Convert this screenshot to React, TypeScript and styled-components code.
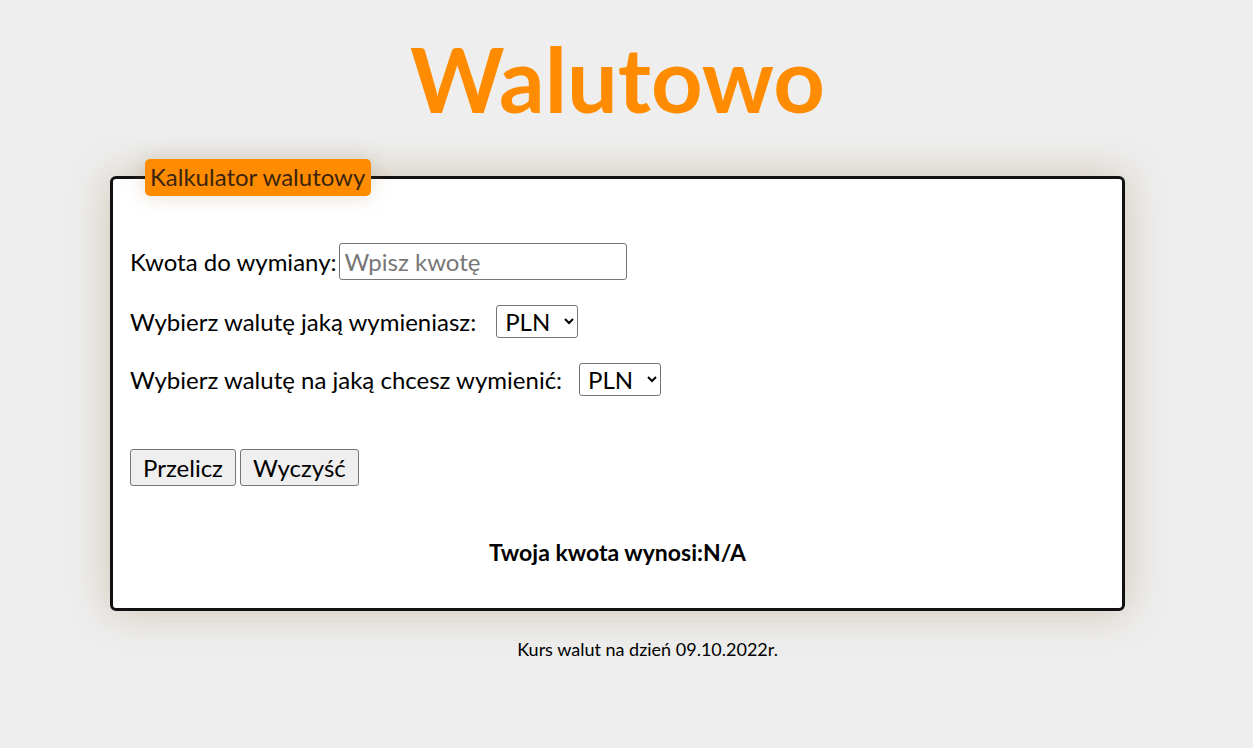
import React from "react";
import styled, { createGlobalStyle } from "styled-components";

const Global = createGlobalStyle`
  html, body { margin: 0; padding: 0; background: #eeeeee; }
  body { font-family: Lato, "Open Sans", sans-serif; color: #000; }
`;

const Page = styled.div`
  display: flex;
  flex-direction: column;
  padding: 0 128px 0 110px;
`;

const Title = styled.h1`
  margin: 24px 0 0 0;
  text-align: center;
  font-size: 90px;
  line-height: 108px;
  font-weight: 700;
  color: #ff8c00;
`;

const Card = styled.fieldset`
  margin: 27px 0 0 0;
  padding: 47px 17px 41px 17px;
  border: 3px solid #111;
  border-radius: 6px;
  background: #fff;
  box-shadow: 0 0 40px rgba(150, 120, 70, 0.35);
  display: flex;
  flex-direction: column;
  min-width: 0;
`;

const Legend = styled.legend`
  margin-left: 15px;
  padding: 3px 6px 4px 5px;
  background: #ff8c00;
  border-radius: 5px;
  font-size: 24px;
  line-height: 30px;
  color: #3a2410;
  box-shadow: 0 0 20px rgba(150, 120, 70, 0.25);
`;

const Row = styled.div<{ $mb: number }>`
  display: flex;
  align-items: center;
  font-size: 24px;
  height: 37px;
  margin-bottom: ${(p) => p.$mb}px;
`;

const Label = styled.label<{ $gap: number }>`
  margin-right: ${(p) => p.$gap}px;
`;

const TextInput = styled.input`
  box-sizing: border-box;
  width: 288px;
  height: 37px;
  font-family: Lato, sans-serif;
  font-size: 24px;
  padding: 0 5px;
  border: 1px solid #767676;
  border-radius: 3px;
  &::placeholder { color: #777; }
`;

const Select = styled.select`
  box-sizing: border-box;
  height: 33px;
  width: 82px;
  font-family: Lato, sans-serif;
  font-size: 24px;
  color: #000;
  background: #fff;
  border: 1px solid #767676;
  border-radius: 3px;
  padding: 0 2px 0 4px;
`;

const Buttons = styled.div`
  display: flex;
  gap: 4px;
  margin-top: 51px;
`;

const Button = styled.button`
  box-sizing: border-box;
  height: 37px;
  font-family: Lato, sans-serif;
  font-size: 24px;
  padding: 0 12px;
  background: #efefef;
  color: #000;
  border: 1px solid #767676;
  border-radius: 3px;
`;

const Result = styled.div`
  margin-top: 51px;
  text-align: center;
  font-size: 23px;
  font-weight: 700;
  line-height: 30px;
`;

const Footer = styled.p`
  margin: 27px 0 0 0;
  text-align: center;
  padding-left: 60px;
  font-size: 18px;
  line-height: 22px;
`;

export default function App() {
  return (
    <>
      <Global />
      <Page>
        <Title>Walutowo</Title>
        <Card>
          <Legend>Kalkulator walutowy</Legend>
          <Row $mb={23}>
            <Label $gap={2}>Kwota do wymiany:</Label>
            <TextInput placeholder="Wpisz kwotę" />
          </Row>
          <Row $mb={21}>
            <Label $gap={20}>Wybierz walutę jaką wymieniasz:</Label>
            <Select defaultValue="PLN">
              <option>PLN</option>
              <option>EUR</option>
              <option>USD</option>
            </Select>
          </Row>
          <Row $mb={0}>
            <Label $gap={17}>Wybierz walutę na jaką chcesz wymienić:</Label>
            <Select defaultValue="PLN">
              <option>PLN</option>
              <option>EUR</option>
              <option>USD</option>
            </Select>
          </Row>
          <Buttons>
            <Button>Przelicz</Button>
            <Button>Wyczyść</Button>
          </Buttons>
          <Result>Twoja kwota wynosi:N/A</Result>
        </Card>
        <Footer>Kurs walut na dzień 09.10.2022r.</Footer>
      </Page>
    </>
  );
}
